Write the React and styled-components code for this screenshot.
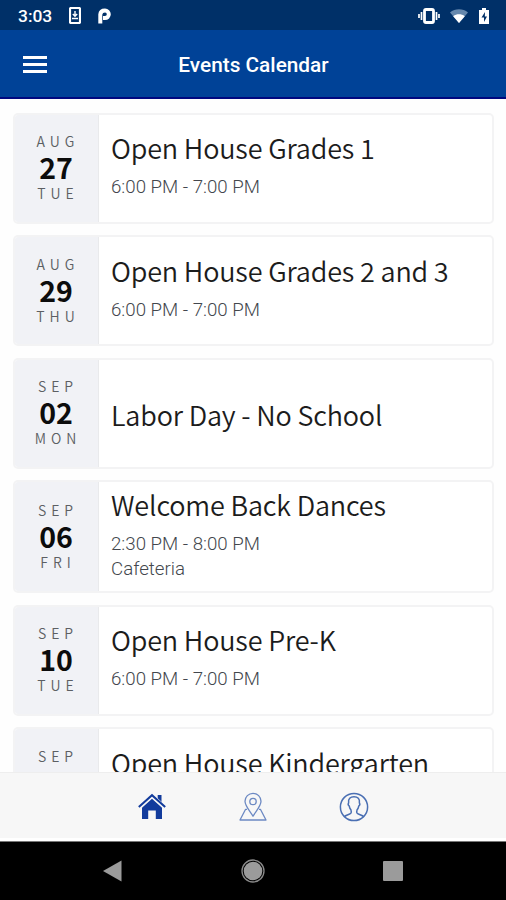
import styled, { createGlobalStyle } from "styled-components";

const GlobalStyle = createGlobalStyle`
  * {
    box-sizing: border-box;
  }
  body {
    margin: 0;
    background: #fff;
    font-family: Roboto, sans-serif;
  }
`;

const Screen = styled.div`
  display: flex;
  flex-direction: column;
  width: 506px;
  height: 900px;
  overflow: hidden;
  background: #fefefe;
`;

const StatusBar = styled.div`
  flex: none;
  display: flex;
  align-items: center;
  justify-content: space-between;
  height: 30px;
  padding: 1px 16px 0 18px;
  background: #003068;
  color: #fff;
`;

const StatusGroup = styled.div`
  display: flex;
  align-items: center;
  gap: ${(props) => props.$gap}px;
`;

const Clock = styled.span`
  width: 34px;
  font-size: 17.4px;
  font-weight: 500;
  line-height: 28px;
  white-space: nowrap;
`;

const Header = styled.header`
  flex: none;
  display: grid;
  grid-template-columns: 60px 1fr 60px;
  align-items: center;
  height: 69px;
  border-bottom: 2px solid #00087f;
  background: #004297;
`;

const MenuButton = styled.button`
  display: flex;
  flex-direction: column;
  gap: 4px;
  width: 24px;
  margin: 2px 0 0 23px;
  padding: 0;
  border: none;
  background: none;
`;

const MenuLine = styled.span`
  height: 3px;
  background: #fff;
`;

const PageTitle = styled.h1`
  margin: 3px 0 0 1px;
  color: #fff;
  font-size: 20.8px;
  font-weight: 500;
  line-height: 26px;
  text-align: center;
  white-space: nowrap;
`;

const EventList = styled.ul`
  flex: 1;
  min-height: 0;
  display: flex;
  flex-direction: column;
  gap: 11.6px;
  margin: 0;
  padding: 13.6px 12px 0 12.5px;
  overflow: hidden;
  list-style: none;
`;

const EventCard = styled.li`
  flex: none;
  display: flex;
  height: ${(props) => (props.$tall ? 112.6 : 111)}px;
  border: 2px solid #f3f3f4;
  border-radius: 5px;
  background: #fff;
  overflow: hidden;
`;

const DateBox = styled.div`
  flex: none;
  display: flex;
  flex-direction: column;
  align-items: center;
  justify-content: center;
  width: 84px;
  padding-bottom: 2px;
  border-right: 1px solid #e9eaec;
  background: #f1f2f6;
  font-family: "Noto Sans CJK SC", sans-serif;
`;

const DateLabel = styled.span`
  padding-left: 4px;
  color: #5c5f63;
  font-size: 14px;
  font-weight: 350;
  letter-spacing: 5px;
  line-height: 26px;
`;

const DateNumber = styled.strong`
  color: #0c0c0c;
  font-size: 28.5px;
  font-weight: 700;
  line-height: 26px;
`;

const EventBody = styled.div`
  display: flex;
  flex-direction: column;
  justify-content: center;
  padding: ${(props) => (props.$tall ? 2 : 1.7)}px 0 0 12.5px;
`;

const EventName = styled.h2`
  margin: 0;
  color: #1c1c1c;
  font-family: "Noto Sans CJK SC", sans-serif;
  font-size: 27px;
  font-weight: 350;
  letter-spacing: -0.17px;
  line-height: 21px;
  white-space: nowrap;
`;

const EventDetails = styled.div`
  margin-top: 17px;
  color: #43474d;
  font-size: 18.7px;
  font-weight: 300;
  line-height: 25px;
`;

const TabBar = styled.nav`
  flex: none;
  display: flex;
  justify-content: center;
  align-items: center;
  gap: 71px;
  height: 69px;
  padding-top: 3px;
  border-top: 1px solid #eeeeee;
  border-bottom: 3px solid #fff;
  background: #f7f7f7;
`;

const NavBar = styled.div`
  flex: none;
  display: flex;
  align-items: center;
  justify-content: space-between;
  height: 59px;
  padding: 0 103px 0 102px;
  border-top: 1px solid #777;
  background: #000;
`;

const StatusIcon = ({ width, height, children }) => (
  <svg width={width} height={height} viewBox={`0 0 ${width} ${height}`} fill="none">
    {children}
  </svg>
);

const HomeIcon = () => (
  <svg width="30" height="30" viewBox="0 0 30 30" fill="none">
    <path d="M20.700 3H24.500V11.500l-3.800-3.500Z" fill="#123b9c" />
    <path d="M5 15.700 15 6.800l10 8.900V27h-6.200v-8.500h-7.600V27H5Z" fill="#123b9c" />
    <path d="M1.800 15.500 15 3.400l13.200 12.100" stroke="#f7f7f7" strokeWidth="3.600" />
    <path d="M1.800 15 15 3.200 28.200 15" stroke="#123b9c" strokeWidth="2" />
  </svg>
);

const MapIcon = () => (
  <svg width="30" height="30" viewBox="0 0 30 30" fill="none" stroke="#6c89c3" strokeWidth="1.3" strokeLinejoin="round">
    <path d="M15 24.200C12.600 20 7 14.200 7 9.300a8 8 0 0 1 16 0c0 4.900-5.600 10.700-8 14.900Z" />
    <circle cx="15" cy="9.5" r="3.2" />
    <path d="M9 17.300H7.600L2 28h26l-5.600-10.700H21" />
  </svg>
);

const ProfileIcon = () => (
  <svg width="30" height="30" viewBox="0 0 30 30" fill="none" stroke="#4a6fb3" strokeWidth="1.5">
    <circle cx="15" cy="15" r="13.6" />
    <path d="M5.300 24.700c1.500-1.900 5.600-2 6.600-3.600.5-1 .3-2.600 0-3.400-1-1.100-1.400-2.100-1.700-3.700-1.200-.9-1.200-2.200-.6-3.200-.5-4 1.600-6 5.400-6s5.900 2 5.400 6c.6 1 .6 2.300-.6 3.200-.3 1.600-.7 2.600-1.700 3.700-.3.800-.5 2.400 0 3.400 1 1.600 5.100 1.700 6.600 3.600" />
  </svg>
);

const events = [
  { month: "AUG", day: "27", weekday: "TUE", name: "Open House Grades 1", time: "6:00 PM - 7:00 PM" },
  { month: "AUG", day: "29", weekday: "THU", name: "Open House Grades 2 and 3", time: "6:00 PM - 7:00 PM" },
  { month: "SEP", day: "02", weekday: "MON", name: "Labor Day - No School" },
  { month: "SEP", day: "06", weekday: "FRI", name: "Welcome Back Dances", time: "2:30 PM - 8:00 PM", place: "Cafeteria" },
  { month: "SEP", day: "10", weekday: "TUE", name: "Open House Pre-K", time: "6:00 PM - 7:00 PM" },
  { month: "SEP", day: "11", weekday: "WED", name: "Open House Kindergarten", time: "6:00 PM - 7:00 PM" },
];

const Event = ({ data }) => {
  const { month, day, weekday, name, time, place } = data;

  return (
    <EventCard $tall={Boolean(place)}>
      <DateBox>
        <DateLabel>{month}</DateLabel>
        <DateNumber>{day}</DateNumber>
        <DateLabel>{weekday}</DateLabel>
      </DateBox>
      <EventBody $tall={Boolean(place)}>
        <EventName>{name}</EventName>
        {time && (
          <EventDetails>
            <div>{time}</div>
            {place && <div>{place}</div>}
          </EventDetails>
        )}
      </EventBody>
    </EventCard>
  );
};

const App = () => {
  return (
    <Screen>
      <GlobalStyle />
      <StatusBar>
        <StatusGroup $gap={17}>
          <Clock>3:03</Clock>
          <StatusIcon width={12} height={17}>
            <rect x="1" y="1" width="10" height="15" rx="1" stroke="#fff" strokeWidth="2.2" />
            <path d="M6 4v5M3.800 7 6 9.200 8.200 7M3 11.500h6" stroke="#fff" strokeWidth="1.4" />
          </StatusIcon>
          <StatusIcon width={13} height={16}>
            <path d="M2.300 15.500V6.500C2.500 3.800 4.500 2.500 7 2.500a3.700 3.700 0 0 1 0 7.600H5" stroke="#fff" strokeWidth="4" />
          </StatusIcon>
        </StatusGroup>
        <StatusGroup $gap={10}>
          <StatusIcon width={22} height={16}>
            <rect x="6.5" y="1.5" width="9" height="13" rx="1.5" stroke="#fff" strokeWidth="2.8" />
            <path d="M3.500 4v8M18.500 4v8M1 6v4M21 6v4" stroke="#fff" strokeWidth="1.7" />
          </StatusIcon>
          <StatusIcon width={18} height={14}>
            <path d="M0 3.500C5-.7 13-.7 18 3.500L9 14Z" fill="#6688ad" />
            <path d="M3.200 7.200c3.400-2.600 8.200-2.600 11.600 0L9 14Z" fill="#fff" />
          </StatusIcon>
          <StatusIcon width={12} height={17}>
            <path d="M1 3h3V1h4v2h3v14H1Z" fill="#fff" />
            <path d="M7 5 3.500 10.500H6V15l3-5.500H6.800Z" fill="#003068" />
          </StatusIcon>
        </StatusGroup>
      </StatusBar>
      <Header>
        <MenuButton aria-label="Menu">
          <MenuLine />
          <MenuLine />
          <MenuLine />
        </MenuButton>
        <PageTitle>Events Calendar</PageTitle>
      </Header>
      <EventList>
        {events.map((event) => (
          <Event key={event.name} data={event} />
        ))}
      </EventList>
      <TabBar>
        <HomeIcon />
        <MapIcon />
        <ProfileIcon />
      </TabBar>
      <NavBar>
        <StatusIcon width={20} height={22}>
          <path d="M1 11 19.500.5v21Z" fill="#9b9b9b" />
        </StatusIcon>
        <StatusIcon width={24} height={24}>
          <circle cx="12" cy="12" r="11" stroke="#8b8b8b" strokeWidth="1.3" />
          <circle cx="12" cy="12" r="9.3" fill="#9b9b9b" />
        </StatusIcon>
        <StatusIcon width={20} height={20}>
          <rect width="20" height="20" rx="1" fill="#9b9b9b" />
        </StatusIcon>
      </NavBar>
    </Screen>
  );
};

export default App;
